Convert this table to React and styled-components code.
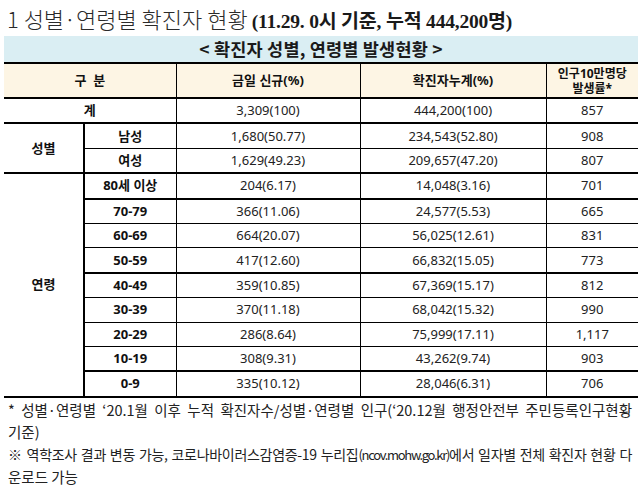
import React from "react";
import styled, { createGlobalStyle } from "styled-components";

const GlobalStyle = createGlobalStyle`
  body {
    margin: 0;
    background: #ffffff;
    font-family: "Noto Sans", "Noto Sans CJK KR", sans-serif;
    color: #1a1a1a;
  }
`;

const rows = [
  { label: "80세 이상", today: "204(6.17)", total: "14,048(3.16)", rate: "701", b: 2 },
  { label: "70-79", today: "366(11.06)", total: "24,577(5.53)", rate: "665", b: 1 },
  { label: "60-69", today: "664(20.07)", total: "56,025(12.61)", rate: "831", b: 1 },
  { label: "50-59", today: "417(12.60)", total: "66,832(15.05)", rate: "773", b: 2 },
  { label: "40-49", today: "359(10.85)", total: "67,369(15.17)", rate: "812", b: 1 },
  { label: "30-39", today: "370(11.18)", total: "68,042(15.32)", rate: "990", b: 1 },
  { label: "20-29", today: "286(8.64)", total: "75,999(17.11)", rate: "1,117", b: 1 },
  { label: "10-19", today: "308(9.31)", total: "43,262(9.74)", rate: "903", b: 2 },
  { label: "0-9", today: "335(10.12)", total: "28,046(6.31)", rate: "706", b: 2 },
];

const App = () => {
  return (
    <Page>
      <GlobalStyle />
      <Heading>
        <HeadingMain>1 성별·연령별 확진자 현황</HeadingMain>
        <HeadingSub>(11.29. 0시 기준, 누적 444,200명)</HeadingSub>
      </Heading>

      <Table>
        <colgroup>
          <col style={{ width: 80 }} />
          <col style={{ width: 92 }} />
          <col style={{ width: 184 }} />
          <col style={{ width: 186 }} />
          <col style={{ width: 92 }} />
        </colgroup>
        <tbody>
          <tr>
            <Caption colSpan={5}>&lt; 확진자 성별, 연령별 발생현황 &gt;</Caption>
          </tr>
          <tr>
            <HeadCell colSpan={2}>구&nbsp; 분</HeadCell>
            <HeadCell $left>금일 신규(%)</HeadCell>
            <HeadCell $left>확진자누계(%)</HeadCell>
            <HeadCell $left $small>
              <Stack>
                <span>인구10만명당</span>
                <span>발생률*</span>
              </Stack>
            </HeadCell>
          </tr>
          <tr>
            <Cell colSpan={2} $bold $b={2}>
              계
            </Cell>
            <Cell $left $b={2}>3,309(100)</Cell>
            <Cell $left $b={2}>444,200(100)</Cell>
            <Cell $left $b={2}>857</Cell>
          </tr>
          <tr>
            <Cell rowSpan={2} $bold $b={2}>
              성별
            </Cell>
            <Cell $bold $divider $b={1}>남성</Cell>
            <Cell $left $b={1}>1,680(50.77)</Cell>
            <Cell $left $b={1}>234,543(52.80)</Cell>
            <Cell $left $b={1}>908</Cell>
          </tr>
          <tr>
            <Cell $bold $divider $b={2}>여성</Cell>
            <Cell $left $b={2}>1,629(49.23)</Cell>
            <Cell $left $b={2}>209,657(47.20)</Cell>
            <Cell $left $b={2}>807</Cell>
          </tr>
          {rows.map((r, i) => (
            <tr key={r.label}>
              {i === 0 && (
                <Cell rowSpan={rows.length} $bold $b={2}>
                  연령
                </Cell>
              )}
              <Cell $bold $divider $b={r.b}>{r.label}</Cell>
              <Cell $left $b={r.b}>{r.today}</Cell>
              <Cell $left $b={r.b}>{r.total}</Cell>
              <Cell $left $b={r.b}>{r.rate}</Cell>
            </tr>
          ))}
        </tbody>
      </Table>

      <Notes>
        <NoteLine $spread>
          * 성별·연령별 ‘20.1월 이후 누적 확진자수/성별·연령별 인구(‘20.12월 행정안전부 주민등록인구현황
        </NoteLine>
        <NoteLine>기준)</NoteLine>
        <NoteLine $spread $tight>
          ※ 역학조사 결과 변동 가능, 코로나바이러스감염증-19 누리집<Url>(ncov.mohw.go.kr)</Url>에서 일자별 전체 확진자 현황 다
        </NoteLine>
        <NoteLine>운로드 가능</NoteLine>
      </Notes>
    </Page>
  );
};

export default App;

const Page = styled.div`
  width: 638px;
  overflow: hidden;
`;

const Heading = styled.div`
  display: flex;
  align-items: baseline;
  gap: 4px;
  height: 36px;
  padding: 2px 0 0 7px;
  box-sizing: border-box;
  white-space: nowrap;
`;

const HeadingMain = styled.span`
  font-family: "Noto Sans CJK KR", sans-serif;
  font-weight: 300;
  font-size: 22px;
  color: #2a2a2a;
`;

const HeadingSub = styled.span`
  font-family: "Liberation Serif", "Noto Sans CJK KR", serif;
  font-weight: 700;
  font-size: 19.5px;
  letter-spacing: -0.2px;
  color: #1a1a1a;
`;

const Table = styled.table`
  margin-left: 4px;
  width: 634px;
  border-collapse: collapse;
  table-layout: fixed;
`;

const Caption = styled.td`
  height: 26px;
  padding: 0;
  background: #daeef3;
  border-bottom: 2px solid #000;
  text-align: center;
  font-family: "Noto Sans CJK KR", sans-serif;
  font-weight: 700;
  font-size: 17.5px;
  letter-spacing: 0.2px;
  line-height: 1;
`;

const HeadCell = styled.td`
  height: 33px;
  padding: 0;
  background: #fdf5e4;
  border-bottom: 2px solid #000;
  border-left: ${(p) => (p.$left ? "1px solid #000" : "none")};
  text-align: center;
  font-weight: 700;
  font-size: ${(p) => (p.$small ? "12px" : "13px")};
  line-height: ${(p) => (p.$small ? "15px" : "1")};
  color: #111;
`;

const Stack = styled.div`
  display: flex;
  flex-direction: column;
  align-items: center;
`;

const Cell = styled.td`
  height: 23.4px;
  padding: 0;
  border-bottom: ${(p) => p.$b}px solid #000;
  border-left: ${(p) =>
    p.$divider ? "2px solid #000" : p.$left ? "1px solid #000" : "none"};
  text-align: center;
  font-weight: ${(p) => (p.$bold ? 700 : 400)};
  font-size: 13px;
  line-height: 1;
  color: ${(p) => (p.$bold ? "#111" : "#222")};
`;

const Notes = styled.div`
  padding: 1px 6px 0 8px;
  font-family: "Noto Sans CJK KR", sans-serif;
  font-size: 14.5px;
  line-height: 22.2px;
  color: #222;
`;

const NoteLine = styled.div`
  white-space: nowrap;
  font-size: ${(p) => (p.$tight ? "14px" : "inherit")};
  letter-spacing: ${(p) => (p.$tight ? "-0.3px" : "normal")};
  text-align: ${(p) => (p.$spread ? "justify" : "left")};
  text-align-last: ${(p) => (p.$spread ? "justify" : "auto")};
`;

const Url = styled.span`
  letter-spacing: -1.3px;
  font-size: 13px;
`;
